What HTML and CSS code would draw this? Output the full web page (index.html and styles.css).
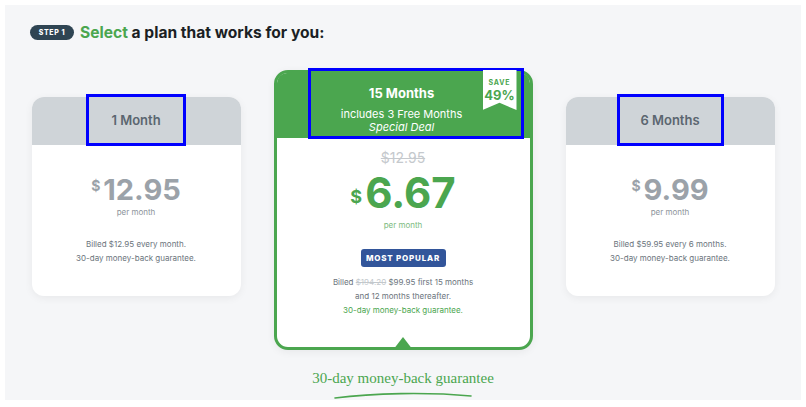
FILE: index.html
```html
<!DOCTYPE html>
<html lang="en">
    <head>
        <meta charset="UTF-8">
        <meta name="viewport" content="width=device-width,initial-scale=1.0">
        <title>Select a plan</title>
        <link rel="stylesheet" href="styles.css">
    </head>
    <body>
        <div class="page">
            <h2 class="heading">
                <span class="step">STEP 1</span>
                <span><span class="green">Select</span> a plan that works for you:</span>
            </h2>

            <div class="plans">
                <div class="card side">
                    <div class="head">
                        <div class="label">1 Month</div>
                    </div>
                    <div class="body">
                        <div class="price"><sup>$</sup>12.95</div>
                        <div class="per">per month</div>
                        <p class="billed">Billed $12.95 every month.<br>30-day money-back guarantee.</p>
                    </div>
                </div>

                <div class="card best">
                    <div class="head">
                        <div class="label">
                            <strong>15 Months</strong>
                            <span>includes 3 Free Months</span>
                            <em>Special Deal</em>
                        </div>
                        <div class="ribbon">
                            <span class="save">SAVE</span>
                            <span class="pct">49%</span>
                        </div>
                    </div>
                    <div class="body">
                        <div class="old">$12.95</div>
                        <div class="price"><sup>$</sup>6.67</div>
                        <div class="per">per month</div>
                        <div class="popular">MOST POPULAR</div>
                        <p class="billed">Billed <s>$194.20</s> $99.95 first 15 months<br>and 12 months thereafter.<br><span class="green">30-day money-back guarantee.</span></p>
                    </div>
                    <div class="pointer"></div>
                </div>

                <div class="card side">
                    <div class="head">
                        <div class="label wide">6 Months</div>
                    </div>
                    <div class="body">
                        <div class="price"><sup>$</sup>9.99</div>
                        <div class="per">per month</div>
                        <p class="billed">Billed $59.95 every 6 months.<br>30-day money-back guarantee.</p>
                    </div>
                </div>
            </div>

            <div class="guarantee">
                <span>30-day money-back guarantee</span>
                <svg width="140" height="8" viewBox="0 0 140 8">
                    <path d="M2 6 C 40 1, 95 0, 138 4" stroke="#4ba64f" stroke-width="1.6" fill="none" stroke-linecap="round"/>
                </svg>
            </div>
        </div>
    </body>
</html>
```

FILE: styles.css
```css
*{
    margin: 0;
    padding: 0;
    box-sizing: border-box;
    font-family: Inter, "Liberation Sans", sans-serif;
}
body{
    background-color: #fff;
}
.page{
    margin: 5px 5px 0 5px;
    height: 395px;
    background-color: #f5f6f8;
    padding: 18px 0 0 25px;
}
.green{
    color: #4ba64f;
}
.heading{
    display: flex;
    align-items: center;
    gap: 6px;
    font-size: 15.6px;
    font-weight: 700;
    color: #1b1f24;
}
.step{
    display: inline-flex;
    align-items: center;
    justify-content: center;
    width: 44px;
    height: 15px;
    border-radius: 8px;
    background-color: #2f4553;
    color: #fff;
    font-size: 7px;
    font-weight: 800;
    letter-spacing: 0.6px;
}
.plans{
    display: flex;
    align-items: flex-start;
    justify-content: center;
    gap: 33px;
    margin: 28px 0 0 -25px;
}
.card{
    position: relative;
    background-color: #fff;
    text-align: center;
}
.card.side{
    width: 209px;
    height: 199px;
    margin-top: 27px;
    border-radius: 12px;
    box-shadow: 0 2px 8px rgba(0,0,0,0.06);
}
.side .head{
    height: 48px;
    display: flex;
    justify-content: center;
    border-radius: 12px 12px 0 0;
    background-color: #cfd4d8;
}
.side .label{
    width: 100px;
    height: 52px;
    margin-top: -3px;
    display: flex;
    align-items: center;
    justify-content: center;
    border: 3px solid #0000ff;
    font-size: 13px;
    font-weight: 600;
    color: #5b6670;
}
.side .label.wide{
    width: 107px;
}
.side .body{
    padding-top: 28px;
}
.price{
    font-size: 29px;
    line-height: 34px;
    font-weight: 700;
    color: #9ba2a9;
}
.price sup{
    font-size: 14px;
    vertical-align: top;
    position: relative;
    top: -4px;
    margin-right: 3px;
}
.per{
    font-size: 8px;
    line-height: 12px;
    color: #8d949b;
    margin-top: -1px;
}
.billed{
    margin-top: 19px;
    font-size: 8px;
    line-height: 14px;
    color: #6b747c;
}
.billed s{
    color: #c3c8cc;
}
.card.best{
    width: 259px;
    height: 280px;
    border: 3px solid #4ba64f;
    border-radius: 14px;
    box-shadow: 0 2px 8px rgba(0,0,0,0.06);
}
.best .head{
    position: relative;
    height: 65px;
    display: flex;
    justify-content: flex-end;
    padding-right: 6px;
    border-radius: 10px 10px 0 0;
    background-color: #4ba64f;
}
.best .label{
    width: 216px;
    height: 71px;
    margin-top: -5px;
    display: flex;
    flex-direction: column;
    align-items: center;
    padding: 15px 28px 0 0;
    border: 3px solid #0000ff;
    color: #fff;
    font-size: 11px;
    line-height: 13px;
}
.best .label strong{
    font-size: 13px;
    line-height: 14px;
    font-weight: 700;
    margin-bottom: 8px;
}
.best .label em{
    font-style: italic;
}
.ribbon{
    position: absolute;
    top: -3px;
    right: 13px;
    width: 34px;
    height: 40px;
    padding-top: 8px;
    display: flex;
    flex-direction: column;
    align-items: center;
    background-color: #fff;
    clip-path: polygon(0 0, 100% 0, 100% 100%, 50% 82%, 0 100%);
    color: #4ba64f;
    font-weight: 700;
}
.ribbon .save{
    font-size: 7px;
    line-height: 9px;
    letter-spacing: 0.8px;
}
.ribbon .pct{
    font-size: 13px;
    line-height: 15px;
    margin-top: 1px;
}
.best .body{
    padding-top: 13px;
}
.old{
    font-size: 14px;
    line-height: 14px;
    color: #c5c9cd;
    text-decoration: line-through;
}
.best .price{
    font-size: 42px;
    line-height: 40px;
    color: #4ba64f;
    margin-top: 8px;
}
.best .price sup{
    font-size: 18px;
    top: 4px;
}
.best .per{
    color: #7dbb80;
    margin-top: 6px;
}
.popular{
    display: inline-block;
    margin-top: 18px;
    width: 85px;
    height: 18px;
    line-height: 18px;
    border-radius: 3px;
    background-color: #32559a;
    color: #fff;
    font-size: 8px;
    font-weight: 800;
    letter-spacing: 0.8px;
}
.best .billed{
    margin-top: 8px;
}
.pointer{
    position: absolute;
    left: 50%;
    bottom: -3px;
    margin-left: -10px;
    width: 0;
    height: 0;
    border-left: 10px solid transparent;
    border-right: 10px solid transparent;
    border-bottom: 13px solid #4ba64f;
}
.guarantee{
    display: flex;
    flex-direction: column;
    align-items: center;
    margin: 19px 0 0 -25px;
}
.guarantee span{
    font-family: "Liberation Serif", serif;
    font-size: 15px;
    line-height: 18px;
    color: #4ba64f;
}
.guarantee svg{
    margin-top: 5px;
}
```
